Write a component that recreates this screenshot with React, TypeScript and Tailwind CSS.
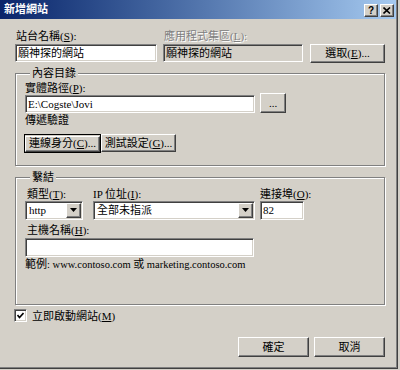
import React from "react";

const sunken =
  "border border-t-[#808080] border-l-[#808080] border-b-white border-r-white shadow-[inset_1px_1px_0_#404040,inset_-1px_-1px_0_#d4d0c8]";
const raised =
  "border border-t-white border-l-white border-b-[#404040] border-r-[#404040] shadow-[inset_-1px_-1px_0_#808080]";
const etched = "border border-[#808080] shadow-[inset_1px_1px_0_#fff,1px_1px_0_#fff]";

function Key({ k }: { k: string }) {
  return (
    <>
      (<u className="underline-offset-1">{k}</u>)
    </>
  );
}

function Group({ title, className, children }: { title: string; className?: string; children: React.ReactNode }) {
  return (
    <div className={`${etched} ${className ?? ""}`}>
      <div className="-mt-[8px] ml-[5px] w-fit bg-[#d4d0c8] px-[2px] leading-[14px]">{title}</div>
      {children}
    </div>
  );
}

function Arrow() {
  return (
    <div className={`${raised} flex h-full w-[15px] items-center justify-center bg-[#d4d0c8]`}>
      <svg width="7" height="4" viewBox="0 0 7 4">
        <polygon points="0,0 7,0 3.5,4" fill="#000" />
      </svg>
    </div>
  );
}

function Select({ value, className }: { value: string; className?: string }) {
  return (
    <div className={`${sunken} flex h-[19px] items-center bg-white p-px ${className ?? ""}`}>
      <span className="flex-1 pl-[2px] leading-[14px]">{value}</span>
      <Arrow />
    </div>
  );
}

export default function App() {
  return (
    <div className="h-[370px] w-[400px] bg-[#d4d0c8] font-['Liberation_Serif','Noto_Sans_CJK_TC',serif] text-[11px] text-black">
      <div className="flex h-[369px] w-[398px] flex-col border-r border-b border-[#404040]">
        <div className="flex flex-1 flex-col border-r border-b border-[#808080]">
          {/* title bar */}
          <div className="flex h-[19px] items-center bg-linear-to-r from-[#0a246a] to-[#a6caf0] pl-[4px] pr-[2px]">
            <span className="flex-1 font-['Liberation_Sans','Noto_Sans_CJK_TC',sans-serif] text-[11px] font-bold text-white">
              新增網站
            </span>
            <div className="mt-[2px] flex gap-[2px]">
              <div className={`${raised} flex h-[13px] w-[14px] items-center justify-center bg-[#d4d0c8] font-['Liberation_Sans',sans-serif] text-[10px] font-bold leading-none`}>
                ?
              </div>
              <div className={`${raised} flex h-[13px] w-[14px] items-center justify-center bg-[#d4d0c8]`}>
                <svg width="8" height="7" viewBox="0 0 8 7">
                  <path d="M0.5 0.5 L7 6.5 M7 0.5 L0.5 6.5" stroke="#000" strokeWidth="1.6" />
                </svg>
              </div>
            </div>
          </div>

          <div className="flex flex-1 flex-col whitespace-nowrap pl-[15px] pr-[11px]">
            {/* site name row */}
            <div className="flex items-start pt-[10px]">
              <div className="w-[142px]">
                <div className="pl-px leading-[14px]">
                  站台名稱<Key k="S" />:
                </div>
                <div className={`${sunken} mt-px flex h-[18px] items-center bg-white pl-[2px]`}>願神探的網站</div>
              </div>
              <div className="ml-[6px] w-[140px]">
                <div className="pl-px leading-[14px] text-[#808080] [text-shadow:1px_1px_0_#fff]">
                  應用程式集區<Key k="L" />:
                </div>
                <div className={`${sunken} mt-px flex h-[18px] items-center bg-[#d4d0c8] pl-[2px]`}>願神探的網站</div>
              </div>
              <button className={`${raised} ml-[7px] mt-[15px] h-[19px] w-[75px] bg-[#d4d0c8]`}>
                選取<Key k="E" />...
              </button>
            </div>

            {/* content directory */}
            <Group title="內容目錄" className="mt-[10px] pb-[12px] pl-[9px]">
              <div className="mt-px leading-[14px]">
                實體路徑<Key k="P" />:
              </div>
              <div className="flex items-start">
                <div className={`${sunken} flex h-[18px] w-[230px] items-center bg-white pl-[2px]`}>E:\Cogste\Jovi</div>
                <button className={`${raised} -mt-[2px] ml-[5px] h-[20px] w-[26px] bg-[#d4d0c8] leading-none`}>...</button>
              </div>
              <div className="leading-[14px]">傳遞驗證</div>
              <div className="mt-[7px] flex">
                <div className="-ml-px border border-black">
                  <button className={`${raised} h-[16px] w-[75px] bg-[#d4d0c8] leading-none`}>
                    連線身分<Key k="C" />...
                  </button>
                </div>
                <button className={`${raised} h-[18px] w-[75px] bg-[#d4d0c8] leading-none`}>
                  測試設定<Key k="G" />...
                </button>
              </div>
            </Group>

            {/* bindings */}
            <Group title="繫結" className="mt-[11px] pb-[32px] pl-[9px]">
              <div className="mt-[3px] flex">
                <div className="w-[58px]">
                  <div className="pl-[2px] leading-[14px]">
                    類型<Key k="T" />:
                  </div>
                  <Select value="http" />
                </div>
                <div className="ml-[10px] w-[162px]">
                  <div className="leading-[14px]">
                    IP 位址<Key k="I" />:
                  </div>
                  <Select value="全部未指派" />
                </div>
                <div className="ml-[5px] w-[44px]">
                  <div className="leading-[14px]">
                    連接埠<Key k="O" />:
                  </div>
                  <div className={`${sunken} flex h-[19px] items-center bg-white pl-[2px]`}>82</div>
                </div>
              </div>
              <div className="mt-[3px] pl-[2px] leading-[14px]">
                主機名稱<Key k="H" />:
              </div>
              <div className={`${sunken} mt-px h-[19px] w-[229px] bg-white`} />
              <div className="leading-[14px]">
                範例<span className="text-[10.5px]">: www.contoso.com </span>或
                <span className="text-[10.5px]"> marketing.contoso.com</span>
              </div>
            </Group>

            {/* start now */}
            <div className="-ml-px mt-[4px] flex items-center">
              <div className={`${sunken} flex h-[13px] w-[13px] items-center justify-center bg-white`}>
                <svg width="7" height="7" viewBox="0 0 7 7">
                  <path d="M0.5 3 L2.5 5.5 L6.5 1" stroke="#000" strokeWidth="1.6" fill="none" />
                </svg>
              </div>
              <span className="ml-[5px] leading-[14px]">
                立即啟動網站<Key k="M" />
              </span>
            </div>

            {/* footer buttons */}
            <div className="mt-auto flex justify-end gap-[5px] pb-[10px]">
              <button className={`${raised} h-[20px] w-[71px] bg-[#d4d0c8]`}>確定</button>
              <button className={`${raised} h-[20px] w-[71px] bg-[#d4d0c8]`}>取消</button>
            </div>
          </div>
        </div>
      </div>
    </div>
  );
}
